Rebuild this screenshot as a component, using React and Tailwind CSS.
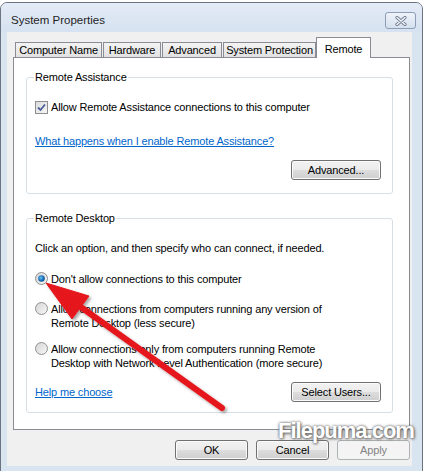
import React from "react";

const btn =
    "h-[20px] rounded-[3px] border border-[#707070] bg-[linear-gradient(#f2f2f2,#ebebeb_50%,#dddddd_50%,#cfcfcf)] shadow-[inset_0_0_0_1px_#fbfbfb] text-black leading-[18px] text-center";

const tabs = [
    { label: "Computer Name", w: "w-[87px]" },
    { label: "Hardware", w: "w-[58px]" },
    { label: "Advanced", w: "w-[60px]" },
    { label: "System Protection", w: "w-[93px]" },
];

const CheckBox = () => (
    <div className="w-[13px] h-[13px] shrink-0 border border-[#8f8f8f] bg-[linear-gradient(135deg,#dcdcdc,#f6f6f6)] flex items-center justify-center">
        <svg width="9" height="9" viewBox="0 0 9 9">
            <path d="M1 4.5 L3.5 7 L8 1.5" fill="none" stroke="#4a5f97" strokeWidth="1.8" />
        </svg>
    </div>
);

const Radio = ({ checked }) => (
    <svg width="13" height="13" viewBox="0 0 13 13" className="shrink-0">
        <defs>
            <linearGradient id="rg" x1="0" y1="0" x2="1" y2="1">
                <stop offset="0" stopColor="#d4d4d4" />
                <stop offset="1" stopColor="#f8f8f8" />
            </linearGradient>
            <radialGradient id="dot" cx="0.4" cy="0.4" r="0.6">
                <stop offset="0" stopColor="#6cc4f0" />
                <stop offset="0.6" stopColor="#1f78c0" />
                <stop offset="1" stopColor="#0c4f8c" />
            </radialGradient>
        </defs>
        <circle cx="6.5" cy="6.5" r="6" fill="url(#rg)" stroke="#8e8f8f" strokeWidth="1" />
        {checked && <circle cx="6.5" cy="6.5" r="3.3" fill="url(#dot)" />}
    </svg>
);

const GroupLabel = ({ children }) => (
    <span className="-mt-[8px] -ml-[1px] self-start bg-white px-[1px] leading-[14px]">{children}</span>
);

const App = () => {
    return (
        <div className="relative w-[424px] h-[471px] overflow-hidden bg-white text-[11px] tracking-[-0.15px] text-black font-['Liberation_Sans',Arial,sans-serif]">
            <div className="mt-[2px] w-[423px] h-[480px] border border-[#6b7480] rounded-t-[7px] bg-[#d9e4f1] flex flex-col">
                {/* title bar */}
                <div className="h-[29px] flex items-start justify-between bg-[linear-gradient(#e3ebf6,#d6e2f1)] rounded-t-[6px]">
                    <span className="ml-[10px] mt-[10px] text-[11.5px] tracking-normal leading-[14px] text-[#1e1e1e]">System Properties</span>
                    <div className="mt-[9px] mr-[6px] w-[31px] h-[17px] rounded-[3px] border border-[#8c9db5] bg-[linear-gradient(#eef3f9,#d5e0ee)] flex items-center justify-center">
                        <svg width="12" height="10" viewBox="0 0 12 10">
                            <path d="M2 1.5 L10 8.5 M10 1.5 L2 8.5" stroke="#6d7b8f" strokeWidth="3.2" strokeLinecap="round" />
                            <path d="M2 1.5 L10 8.5 M10 1.5 L2 8.5" stroke="#f4f6f9" strokeWidth="1.5" strokeLinecap="round" />
                        </svg>
                    </div>
                </div>

                {/* client area */}
                <div className="ml-[6px] w-[405px] h-[434px] bg-[#f0f0f0] pt-[5px] pl-[6px]">
                    <div className="relative z-10 h-[20px] flex items-end gap-[1px] pl-[2px]">
                        {tabs.map((t) => (
                            <div
                                key={t.label}
                                className={`${t.w} h-[15px] border border-b-0 border-[#898c95] bg-[linear-gradient(#f3f3f3,#e1e1e1)] text-center leading-[14px]`}
                            >
                                {t.label}
                            </div>
                        ))}
                        <div className="-ml-[1px] w-[55px] h-[21px] -mb-[1px] border border-b-0 border-[#898c95] bg-white pt-[4px] text-center leading-[14px]">
                            Remote
                        </div>
                    </div>

                    <div className="w-[397px] border border-[#898c95] bg-white pt-[19px] pl-[12px] pr-[16px] pb-[16px]">
                        {/* Remote Assistance */}
                        <div className="w-[367px] flex flex-col border border-[#d5dfe5] rounded-[3px] pl-[8px] pr-[11px] pb-[13px]">
                            <GroupLabel>Remote Assistance</GroupLabel>
                            <div className="mt-[16px] flex items-center gap-[3px] leading-[14px]">
                                <CheckBox />
                                <span>Allow Remote Assistance connections to this computer</span>
                            </div>
                            <span className="mt-[20px] leading-[14px] text-[#0066cc] underline self-start">
                                What happens when I enable Remote Assistance?
                            </span>
                            <div className="mt-[12px] flex justify-end">
                                <div className={`${btn} w-[90px]`}>Advanced...</div>
                            </div>
                        </div>

                        {/* Remote Desktop */}
                        <div className="mt-[24px] w-[367px] flex flex-col border border-[#d5dfe5] rounded-[3px] pl-[8px] pr-[11px] pb-[10px]">
                            <GroupLabel>Remote Desktop</GroupLabel>
                            <span className="mt-[16px] leading-[14px]">
                                Click an option, and then specify who can connect, if needed.
                            </span>
                            <div className="mt-[17px] flex items-start gap-[3px] leading-[14px]">
                                <Radio checked />
                                <span>Don't allow connections to this computer</span>
                            </div>
                            <div className="mt-[16px] flex items-start gap-[3px] leading-[14px]">
                                <Radio />
                                <span>
                                    Allow connections from computers running any version of
                                    <br />
                                    Remote Desktop (less secure)
                                </span>
                            </div>
                            <div className="mt-[12px] flex items-start gap-[3px] leading-[14px]">
                                <Radio />
                                <span>
                                    Allow connections only from computers running Remote
                                    <br />
                                    Desktop with Network Level Authentication (more secure)
                                </span>
                            </div>
                            <div className="mt-[12px] flex items-center justify-between">
                                <span className="leading-[14px] text-[#0066cc] underline">Help me choose</span>
                                <div className={`${btn} w-[90px]`}>Select Users...</div>
                            </div>
                        </div>
                    </div>

                    <div className="mt-[10px] w-[397px] flex justify-end gap-[8px]">
                        <div className={`${btn} w-[73px]`}>OK</div>
                        <div className={`${btn} w-[73px]`}>Cancel</div>
                        <div className="w-[73px] h-[20px] rounded-[3px] border border-[#adb2b5] bg-[#f4f4f4] text-[#838383] leading-[18px] text-center">
                            Apply
                        </div>
                    </div>
                </div>
            </div>

            {/* watermark */}
            <span className="absolute left-[278px] top-[414px] text-[22px] font-bold tracking-[-1px] text-white [text-shadow:0_0_3px_#555,1px_1px_3px_#777]">
                Filepuma.com
            </span>

            {/* red arrow */}
            <svg className="absolute left-0 top-0 pointer-events-none" width="424" height="471" viewBox="0 0 424 471">
                <defs>
                    <filter id="sh" x="-20%" y="-20%" width="140%" height="140%">
                        <feDropShadow dx="2" dy="2" stdDeviation="1.5" floodColor="#000" floodOpacity="0.35" />
                    </filter>
                </defs>
                <g filter="url(#sh)" fill="#e5191e" stroke="#e5191e">
                    <line x1="78" y1="305" x2="222" y2="408" strokeWidth="6" strokeLinecap="round" />
                    <polygon points="46,283 89,296 72,319" strokeWidth="1" strokeLinejoin="round" />
                </g>
            </svg>
        </div>
    );
};

export default App;
